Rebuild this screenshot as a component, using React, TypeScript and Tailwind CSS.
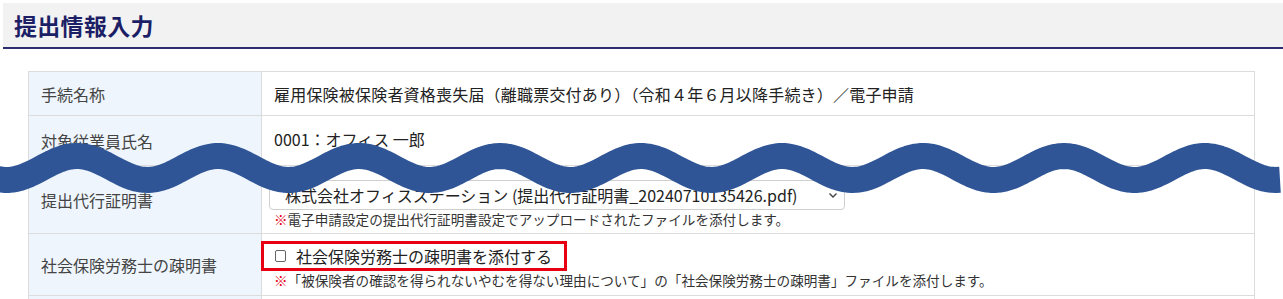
import { ReactNode } from "react";

const font = { fontFamily: '"Noto Sans CJK JP", "Noto Sans", sans-serif' };

function Row({
  label,
  children,
  className,
}: {
  label: string;
  children: ReactNode;
  className: string;
}) {
  return (
    <div className={`flex border-b border-[#dcdcdc] ${className}`}>
      <div className="flex w-[233px] shrink-0 items-center border-r border-[#dcdcdc] bg-[#eef5fc] pl-[12px] text-[16px] text-[#444]">
        {label}
      </div>
      <div className="flex flex-1 flex-col justify-center pl-[12px] text-[16px] text-[#222]">
        {children}
      </div>
    </div>
  );
}

function Note({ children }: { children: ReactNode }) {
  return (
    <p className="mt-[1px] text-[13.6px] leading-[17px] text-[#333]">
      <span className="text-[#e60012]">※</span>
      {children}
    </p>
  );
}

// wavy break line drawn over the table
function Wave() {
  const pts: string[] = [];
  for (let x = -4; x <= 1283; x += 4) {
    const y = 168 - 12 * Math.cos((2 * Math.PI * (x - 77)) / 141);
    pts.push(`${x},${y.toFixed(2)}`);
  }
  return (
    <svg
      className="pointer-events-none absolute left-0 top-0"
      width={1283}
      height={299}
      viewBox="0 0 1283 299"
    >
      <polyline
        points={pts.join(" ")}
        fill="none"
        stroke="#2f5597"
        strokeWidth={26}
        strokeLinecap="butt"
        strokeLinejoin="round"
      />
    </svg>
  );
}

export default function App() {
  return (
    <div className="relative h-[299px] w-[1283px] overflow-hidden bg-white" style={font}>
      <div className="ml-[3px] mt-[3px] flex h-[46px] items-center border-b-2 border-[#2b2d6e] bg-[#f2f2f2] pl-[11px]">
        <h1 className="text-[23px] font-bold tracking-[0.3px] text-[#1d1f66]">提出情報入力</h1>
      </div>

      <div className="mx-[28px] mt-[22px] border-l border-r border-t border-[#dcdcdc]">
        <Row label="手続名称" className="h-[44px]">
          <span className="tracking-[0.2px]">雇用保険被保険者資格喪失届（離職票交付あり）（令和４年６月以降手続き）／電子申請</span>
        </Row>
        <Row label="対象従業員氏名" className="h-[50px]">
          <span className="-mt-[4px]">0001：オフィス 一郎</span>
        </Row>
        <Row label="提出代行証明書" className="h-[68px]">
          <div className="-ml-[5px] mt-[8px] flex h-[30px] w-[576px] items-center justify-between rounded-[4px] border border-[#cfcfcf] pl-[15px] pr-[6px] text-[#222]">
            <span>株式会社オフィスステーション (提出代行証明書_20240710135426.pdf)</span>
            <svg width="10" height="10" viewBox="0 0 10 10">
              <path d="M1.5 3.5 L5 7 L8.5 3.5" fill="none" stroke="#444" strokeWidth="1.4" />
            </svg>
          </div>
          <Note>電子申請設定の提出代行証明書設定でアップロードされたファイルを添付します。</Note>
        </Row>
        <Row label="社会保険労務士の疎明書" className="h-[62px]">
          <label className="-ml-[13px] flex h-[30px] w-[306px] items-center border-[3px] border-[#e60012] pl-[11px]">
            <span className="h-[12px] w-[11px] rounded-[2px] border border-[#666] bg-white" />
            <span className="ml-[10px]">社会保険労務士の疎明書を添付する</span>
          </label>
          <Note>「被保険者の確認を得られないやむを得ない理由について」の「社会保険労務士の疎明書」ファイルを添付します。</Note>
        </Row>
        <Row label="" className="h-[20px]">
          <span />
        </Row>
      </div>

      <Wave />
    </div>
  );
}
